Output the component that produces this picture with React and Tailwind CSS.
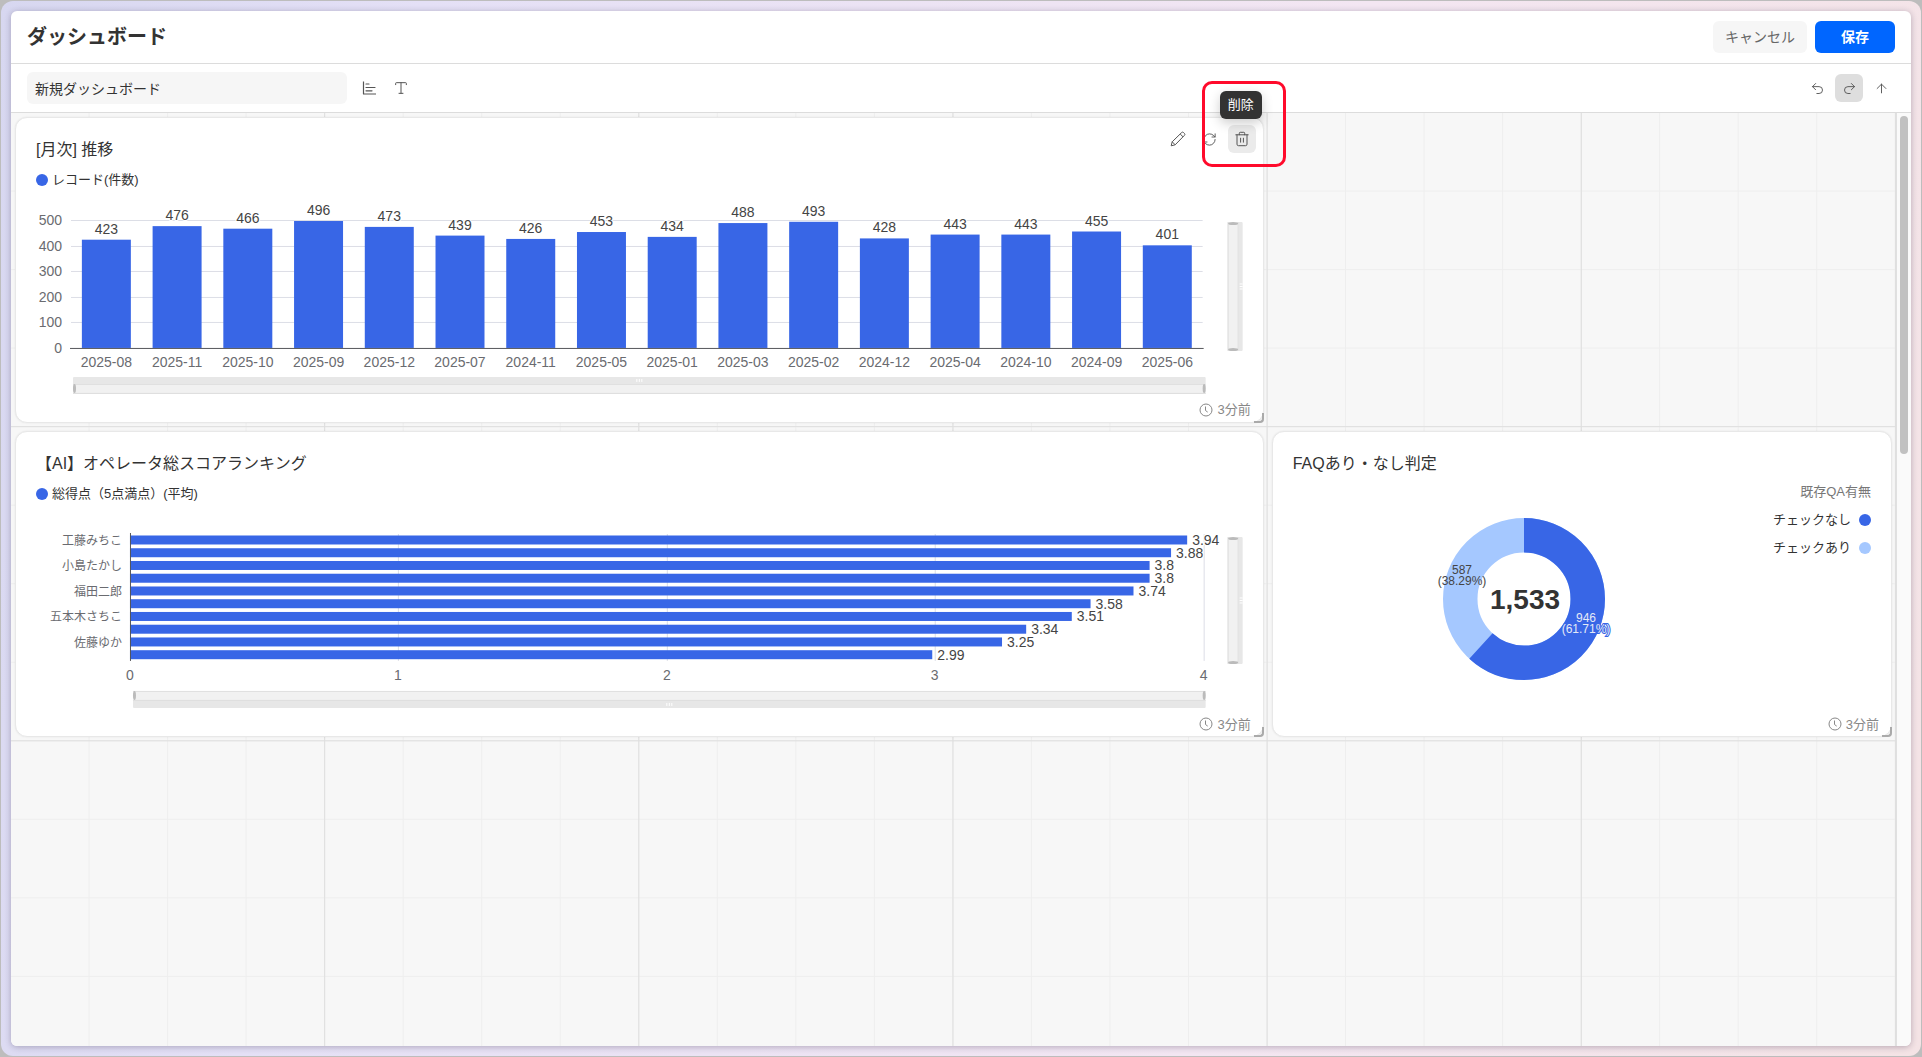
import { useState } from 'react';
import { ArrowUp, Redo2, RefreshCw, Type, Undo2 } from 'lucide-react';

const BLUE = '#3866e6';
const LIGHT_BLUE = '#a5c8ff';

const monthly = [
  ['2025-08', 423],
  ['2025-11', 476],
  ['2025-10', 466],
  ['2025-09', 496],
  ['2025-12', 473],
  ['2025-07', 439],
  ['2024-11', 426],
  ['2025-05', 453],
  ['2025-01', 434],
  ['2025-03', 488],
  ['2025-02', 493],
  ['2024-12', 428],
  ['2025-04', 443],
  ['2024-10', 443],
  ['2024-09', 455],
  ['2025-06', 401],
];

// only every second operator gets a label on the axis
const operators = [
  ['工藤みちこ', 3.94],
  ['', 3.88],
  ['小島たかし', 3.8],
  ['', 3.8],
  ['福田二郎', 3.74],
  ['', 3.58],
  ['五本木さちこ', 3.51],
  ['', 3.34],
  ['佐藤ゆか', 3.25],
  ['', 2.99],
];

const ChartIcon = () => (
  <svg width="16" height="16" viewBox="0 0 16 16" fill="none" stroke="currentColor" aria-hidden="true">
    <path d="M2.5 1.5v12.5M2 14h13" strokeWidth="1.2" />
    <path d="M5 4h3M5 7.5h9M5 10.8h6" strokeWidth="1.2" strokeLinecap="round" />
  </svg>
);

const PencilIcon = () => (
  <svg width="16" height="16" viewBox="0 0 16 16" fill="none" stroke="currentColor" strokeLinejoin="round" aria-hidden="true">
    <path d="M1.2 14.8l1-4L11.6 1.6a1.4 1.4 0 0 1 2 0l.8.8a1.4 1.4 0 0 1 0 2L5.2 13.8l-4 1zM2.2 10.8l3 3M10.2 3l2.8 2.8" />
  </svg>
);

const TrashIcon = () => (
  <svg width="16" height="16" viewBox="0 0 16 16" fill="none" stroke="currentColor" strokeLinecap="round" strokeLinejoin="round" aria-hidden="true">
    <path d="M1.8 3.8h12.4M5.3 3.8V2.3a1 1 0 0 1 1-1h3.4a1 1 0 0 1 1 1v1.5M3 3.8v9.4a1.5 1.5 0 0 0 1.5 1.5h7a1.5 1.5 0 0 0 1.5-1.5V3.8M6.6 7.2v4M9.4 7.2v4" />
  </svg>
);

const ClockIcon = () => (
  <svg width="14" height="14" viewBox="0 0 14 14" fill="none" stroke="currentColor" aria-hidden="true">
    <circle cx="7" cy="7" r="6" />
    <path d="M6.5 3.5v4l2.2 1.6" />
  </svg>
);

const IconButton = ({ label, active, children, onClick }) => (
  <button
    type="button"
    aria-label={label}
    onClick={onClick}
    className={`flex size-7 items-center justify-center rounded-md text-[#555] ${active || ''}`}
  >
    {children}
  </button>
);

// zoom slider under a chart; the darker strip is above or below the window
const HorizontalZoom = ({ x, y, width, stripBelow }) => {
  const body = stripBelow ? y : y + 7;
  const strip = stripBelow ? y + 10 : y;
  return (
    <g>
      <rect x={x} y={y} width={width} height="17" rx="1" fill="#e7e7e7" />
      <rect x={x} y={body} width={width} height="10" fill="#f1f1f1" />
      <path d={`M${x} ${body + 0.5}h${width}M${x} ${body + 9.5}h${width}`} stroke="#dedede" />
      <path d={`M${x + width / 2 - 2.5} ${strip + 2}v3m2.5-3v3m2.5-3v3`} stroke="#fff" />
      <ellipse cx={x + 1.5} cy={body + 4.5} rx="1.5" ry="4.5" fill="#bbb" />
      <ellipse cx={x + width - 1.5} cy={body + 4.5} rx="1.5" ry="4.5" fill="#bbb" />
    </g>
  );
};

const VerticalZoom = ({ x, y, height }) => (
  <g>
    <rect x={x} y={y} width="15" height={height} rx="1" fill="#e7e7e7" />
    <rect x={x} y={y} width="11" height={height} fill="#f1f1f1" />
    <path d={`M${x + 0.5} ${y}v${height}M${x + 10.5} ${y}v${height}`} stroke="#dedede" />
    <path d={`M${x + 12} ${y + height / 2 - 2.5}h3m-3 2.5h3m-3 2.5h3`} stroke="#fff" />
    <ellipse cx={x + 5.5} cy={y + 1.5} rx="5" ry="1.5" fill="#bbb" />
    <ellipse cx={x + 5.5} cy={y + height - 1.5} rx="5" ry="1.5" fill="#bbb" />
  </g>
);

const MonthlyChart = () => {
  const left = 55;
  const right = 1187;
  const bottom = 158;
  const step = (right - left) / monthly.length;
  return (
    <svg viewBox="0 0 1247 207" className="block w-full text-sm" role="img" aria-label="[月次] 推移">
      {[0, 100, 200, 300, 400, 500].map((n) => {
        const y = Math.round(bottom - n * 0.256);
        return (
          <g key={n}>
            {n > 0 && <path d={`M${left} ${y + 0.5}H${right}`} stroke="#dcdee6" />}
            <text x="46" y={y + 5} textAnchor="end" fill="#6a6b70">
              {n}
            </text>
          </g>
        );
      })}
      {monthly.map(([month, count], i) => {
        const center = left + step * (i + 0.5);
        const top = bottom - count * 0.256;
        return (
          <g key={month}>
            <rect x={center - 24.5} y={top} width="49" height={bottom - top} fill={BLUE} />
            <text x={center} y={top - 6} textAnchor="middle" fill="#444" stroke="#fff" strokeWidth="2" paintOrder="stroke">
              {count}
            </text>
            <text x={center} y="177" textAnchor="middle" fill="#6a6b70">
              {month}
            </text>
          </g>
        );
      })}
      <path d={`M${left - 1} ${bottom + 0.5}H${right + 1}`} stroke="#54555a" />
      <HorizontalZoom x={57} y={187} width={1133} />
      <VerticalZoom x={1212} y={32} height={129} />
    </svg>
  );
};

const RankingChart = () => {
  const left = 114;
  const unit = 268.4;
  return (
    <svg viewBox="0 0 1247 207" className="block w-full text-sm" role="img" aria-label="オペレータ総スコアランキング">
      {[0, 1, 2, 3, 4].map((n) => {
        const x = Math.round(left + n * unit);
        return (
          <g key={n}>
            {n > 0 && <path d={`M${x + 0.5} 30V157`} stroke="#dcdee6" />}
            <text x={x} y="176" textAnchor="middle" fill="#6a6b70">
              {n}
            </text>
          </g>
        );
      })}
      {operators.map(([name, score], i) => {
        const center = 36 + i * 12.75;
        const end = left + score * unit;
        return (
          <g key={i}>
            <rect x={left} y={center - 4.5} width={end - left} height="9" fill={BLUE} />
            <text x={end + 5} y={center + 5} fill="#444" stroke="#fff" strokeWidth="2" paintOrder="stroke">
              {score}
            </text>
            <text x="106" y={center + 5} textAnchor="end" fill="#6a6b70" className="text-xs">
              {name}
            </text>
          </g>
        );
      })}
      <path d={`M${left + 0.5} 29V157`} stroke="#54555a" />
      <HorizontalZoom x={117} y={187} width={1073} stripBelow />
      <VerticalZoom x={1212} y={33} height={127} />
    </svg>
  );
};

const FaqChart = () => {
  const total = 1533;
  const radius = 63.75;
  const length = 2 * Math.PI * radius;
  const first = (946 / total) * length;
  return (
    <svg viewBox="0 0 170 170" className="block size-[170px] overflow-visible text-xs" role="img" aria-label="FAQあり・なし判定">
      <circle cx="85" cy="85" r={radius} fill="none" stroke={LIGHT_BLUE} strokeWidth="34.5" />
      <circle
        cx="85"
        cy="85"
        r={radius}
        fill="none"
        stroke={BLUE}
        strokeWidth="34.5"
        strokeDasharray={`${first} ${length}`}
        transform="rotate(-90 85 85)"
      />
      <g fill="#444" textAnchor="middle">
        <text x="23" y="60">587</text>
        <text x="23" y="71">(38.29%)</text>
      </g>
      <g fill="#e4e9f7" stroke={BLUE} strokeWidth="2" paintOrder="stroke" textAnchor="middle">
        <text x="147" y="108">946</text>
        <text x="147" y="119">(61.71%)</text>
      </g>
      <text x="86" y="95" textAnchor="middle" fill="#333" className="text-[28px] font-bold">
        1,533
      </text>
    </svg>
  );
};

const Card = ({ title, className, actions, children }) => (
  <section className={`relative m-1 flex flex-col rounded-xl border border-[#e8e8e8] bg-white shadow-[0_0_2px_rgba(0,0,0,0.08)] ${className}`}>
    <h2 className="px-5 pt-5 text-base leading-6 text-[#333]">{title}</h2>
    {children}
    <footer className="mt-auto flex h-6 items-center justify-end gap-1 pr-3 text-[13px] text-[#888]">
      <ClockIcon />
      3分前
    </footer>
    {actions}
    <span className="absolute -right-px -bottom-px size-[10px] rounded-br-sm border-r-2 border-b-2 border-[#aaa]" />
  </section>
);

const Legend = ({ children }) => (
  <div className="mt-2 flex h-5 items-center gap-1 px-5 text-[13px] text-[#333]">
    <span className="size-3 rounded-full bg-[#3866e6]" />
    {children}
  </div>
);

const CardActions = () => (
  <div className="absolute top-[7px] right-[7px] flex gap-1">
    <IconButton label="編集">
      <PencilIcon />
    </IconButton>
    <IconButton label="更新">
      <RefreshCw size={15} strokeWidth={1.5} />
    </IconButton>
    <IconButton label="削除" active="bg-[#ebebeb]">
      <TrashIcon />
    </IconButton>
    <span
      role="tooltip"
      className="absolute right-[-6px] bottom-[34px] z-10 rounded-md bg-[#333] px-2 text-[13px] leading-7 whitespace-nowrap text-white shadow-[0_4px_12px_rgba(0,0,0,0.2)]"
    >
      削除
    </span>
    <span className="pointer-events-none absolute -top-11 -right-[30px] z-20 h-[86px] w-[84px] rounded-[10px] border-3 border-[#ff0a2b]" />
  </div>
);

const App = () => {
  const [name, setName] = useState('新規ダッシュボード');

  return (
    <div className="h-screen bg-[#bdbdbd] p-px font-['Liberation_Sans','Noto_Sans_CJK_JP',sans-serif]">
      <div className="h-full rounded-xl bg-[linear-gradient(100deg,#d7d7f0_0%,#e4e0f6_20%,#f3e6f2_65%,#f4e3e5_100%)] p-[10px]">
        <div className="flex h-full flex-col rounded-md bg-white shadow-[0_1px_6px_rgba(40,30,60,0.3)]">
          <header className="flex h-[53px] items-center justify-between border-b border-[#dcdcdc] px-4">
            <h1 className="text-xl font-bold text-[#333]">ダッシュボード</h1>
            <div className="flex gap-2 text-sm">
              <button type="button" className="h-8 rounded-md bg-[#f6f6f6] px-3 text-[#666]">
                キャンセル
              </button>
              <button type="button" className="h-8 w-20 rounded-md bg-[#0066ff] font-bold text-white">
                保存
              </button>
            </div>
          </header>

          <div className="flex h-[49px] items-center gap-1 border-b border-[#dcdcdc] px-4">
            <input
              type="text"
              aria-label="ダッシュボード名"
              value={name}
              onChange={(e) => setName(e.target.value)}
              className="mr-1 h-8 w-80 rounded-md bg-[#f6f6f6] px-2 text-sm text-[#333] outline-none"
            />
            <IconButton label="グラフを追加">
              <ChartIcon />
            </IconButton>
            <IconButton label="テキストを追加">
              <Type size={16} strokeWidth={1.5} />
            </IconButton>
            <div className="ml-auto flex gap-1">
              <IconButton label="元に戻す">
                <Undo2 size={15} strokeWidth={1.5} />
              </IconButton>
              <IconButton label="やり直す" active="bg-[#dedede]">
                <Redo2 size={15} strokeWidth={1.5} />
              </IconButton>
              <IconButton label="上へ">
                <ArrowUp size={15} strokeWidth={1.5} />
              </IconButton>
            </div>
          </div>

          <main className="flex min-h-0 flex-1">
            <div className="@container min-w-0 flex-1 rounded-bl-md bg-[#f7f7f7]">
              <div className="grid h-full auto-rows-[calc(100cqw/6)] grid-cols-3 bg-[linear-gradient(to_right,transparent_calc(100%-1px),#dedede_0),linear-gradient(to_bottom,transparent_calc(100%-1px),#dedede_0),linear-gradient(to_right,transparent_calc(100%-1px),#eee_0),linear-gradient(to_bottom,transparent_calc(100%-1px),#eee_0)] bg-size-[calc(100cqw/6)_calc(100cqw/6),calc(100cqw/6)_calc(100cqw/6),calc(100cqw/24)_calc(100cqw/24),calc(100cqw/24)_calc(100cqw/24)]">
                <Card title="[月次] 推移" className="col-span-2" actions={<CardActions />}>
                  <Legend>レコード(件数)</Legend>
                  <MonthlyChart />
                </Card>
                <Card title="【AI】オペレータ総スコアランキング" className="col-span-2 col-start-1">
                  <Legend>総得点（5点満点）(平均)</Legend>
                  <RankingChart />
                </Card>
                <Card title="FAQあり・なし判定">
                  <div className="mt-1.5 flex flex-1 px-5">
                    <div className="flex flex-1 justify-center pt-8">
                      <FaqChart />
                    </div>
                    <ul className="flex w-[115px] flex-col items-end gap-2 text-[13px] leading-5 text-[#333]">
                      <li className="text-[#777]">既存QA有無</li>
                      <li className="flex items-center gap-2">
                        チェックなし
                        <span className="size-3 rounded-full bg-[#3866e6]" />
                      </li>
                      <li className="flex items-center gap-2">
                        チェックあり
                        <span className="size-3 rounded-full bg-[#a5c8ff]" />
                      </li>
                    </ul>
                  </div>
                </Card>
              </div>
            </div>
            <div className="flex w-[15px] justify-center rounded-br-md border-l border-[#e0e0e0] bg-[#fafafa] py-[3px]">
              <div className="h-[36.5%] w-2 rounded-full bg-[#c1c1c1]" />
            </div>
          </main>
        </div>
      </div>
    </div>
  );
};

export default App;
